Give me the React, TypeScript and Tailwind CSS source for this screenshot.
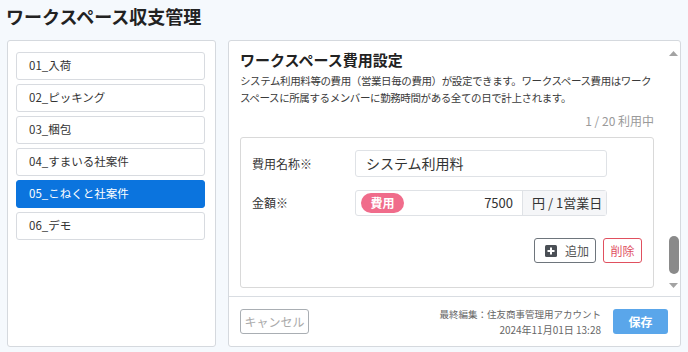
import React, { useState } from 'react';

const font = { fontFamily: '"Noto Sans CJK JP", "Noto Sans", sans-serif' };

const workspaces = ['01_入荷', '02_ピッキング', '03_梱包', '04_すまいる社案件', '05_こねくと社案件', '06_デモ'];

const App: React.FC = () => {
  const [selected, setSelected] = useState(4);

  return (
    <div className="w-[688px] h-[352px] bg-[#f5f9fd] text-[#333] overflow-hidden" style={font}>
      {/* Title */}
      <h1 className="pl-[6px] pt-[3px] h-[40px] text-[18px] leading-[26px] font-bold text-[#222]">ワークスペース収支管理</h1>

      <div className="flex gap-[12px] pl-[7px]">
        {/* Workspace list */}
        <div className="w-[209px] h-[307px] bg-white border border-[#d5d9de] rounded-[3px] pl-[8px] pt-[11px] flex flex-col gap-[4px]">
          {workspaces.map((name, i) => (
            <button
              key={name}
              onClick={() => setSelected(i)}
              className={`w-[189px] h-[28px] rounded-[3px] border pl-[12px] text-left text-[11.5px] ${
                selected === i ? 'bg-[#0b74de] border-[#0b74de] text-white' : 'bg-white border-[#d8dbe0] text-[#333]'
              }`}
            >
              {name}
            </button>
          ))}
        </div>

        {/* Settings */}
        <div className="w-[453px] h-[307px] bg-white border border-[#d5d9de] rounded-[3px] flex flex-col">
          <div className="flex h-[256px] border-b border-[#d9dde2]">
            <div className="w-[438px] pl-[11px] pr-[13px] pt-[8px]">
              <h2 className="text-[15px] leading-[22px] font-bold text-[#222]">ワークスペース費用設定</h2>
              <p className="mt-[1px] text-[10.5px] leading-[17px] text-[#3a3a3a] tracking-[-0.4px] whitespace-nowrap">
                システム利用料等の費用（営業日毎の費用）が設定できます。ワークスペース費用はワーク
                <br />
                スペースに所属するメンバーに勤務時間がある全ての日で計上されます。
              </p>
              <div className="mt-[6px] h-[18px] text-right text-[12px] text-[#9a9a9a]">1 / 20 利用中</div>

              {/* Cost card */}
              <div className="mt-[7px] border border-[#d9d9d9] rounded-[3px] h-[151px] pl-[11px] pr-[11px] pt-[12px]">
                <div className="flex items-center h-[27px]">
                  <span className="w-[103px] text-[12px] text-[#333]">費用名称※</span>
                  <div className="w-[252px] h-[27px] border border-[#dfe2e6] rounded-[3px] flex items-center pl-[10px] text-[14px] text-[#333]">
                    システム利用料
                  </div>
                </div>
                <div className="flex items-center h-[26px] mt-[13px]">
                  <span className="w-[103px] text-[12px] text-[#333]">金額※</span>
                  <div className="w-[252px] h-[26px] border border-[#dfe2e6] rounded-[3px] flex items-center">
                    <span className="ml-[5px] w-[43px] h-[20px] rounded-full bg-[#f06c8b] text-white text-[12px] font-bold flex items-center justify-center">費用</span>
                    <span className="flex-1 text-right pr-[9px] text-[13px] text-[#333]">7500</span>
                    <span className="w-[84px] h-full border-l border-[#dfe2e6] bg-[#f5f6f8] flex items-center pl-[9px] text-[13px] text-[#333]">円 / 1営業日</span>
                  </div>
                </div>
                <div className="flex justify-end gap-[7px] mt-[22px]">
                  <button className="w-[62px] h-[25px] border border-[#6e757c] rounded-[3px] flex items-center pl-[10px] gap-[8px] text-[12px] text-[#555]">
                    <svg width="12" height="12" viewBox="0 0 12 12">
                      <rect x="0" y="0" width="12" height="12" rx="1.5" fill="#4a4f55" />
                      <path d="M6 2.5v7M2.5 6h7" stroke="#fff" strokeWidth="2" />
                    </svg>
                    追加
                  </button>
                  <button className="w-[39px] h-[25px] border border-[#e0505f] rounded-[3px] text-[12px] text-[#e0505f]">削除</button>
                </div>
              </div>
            </div>

            {/* Scrollbar */}
            <div className="w-[13px] flex flex-col items-center pt-[10px] pb-[8px]">
              <svg width="9" height="5" viewBox="0 0 9 5"><path d="M4.5 0L9 5H0z" fill="#a3a3a3" /></svg>
              <div className="flex-1" />
              <div className="w-[10px] h-[38px] rounded-full bg-[#8a8a8a]" />
              <div className="h-[9px]" />
              <svg width="9" height="5" viewBox="0 0 9 5"><path d="M0 0H9L4.5 5z" fill="#a3a3a3" /></svg>
            </div>
          </div>

          {/* Footer */}
          <div className="flex items-center flex-1 pl-[11px] pr-[12px]">
            <button className="w-[69px] h-[25px] border border-[#a9aeb3] rounded-[3px] text-[12px] text-[#aaa]">キャンセル</button>
            <div className="flex-1 text-right text-[9.5px] leading-[15px] text-[#666] pr-[12px]">
              <div>最終編集：住友商事管理用アカウント</div>
              <div className="text-[10px]">2024年11月01日 13:28</div>
            </div>
            <button className="w-[55px] h-[25px] rounded-[3px] bg-[#5aa6ea] text-white text-[12px] font-bold">保存</button>
          </div>
        </div>
      </div>
    </div>
  );
};

export default App;
